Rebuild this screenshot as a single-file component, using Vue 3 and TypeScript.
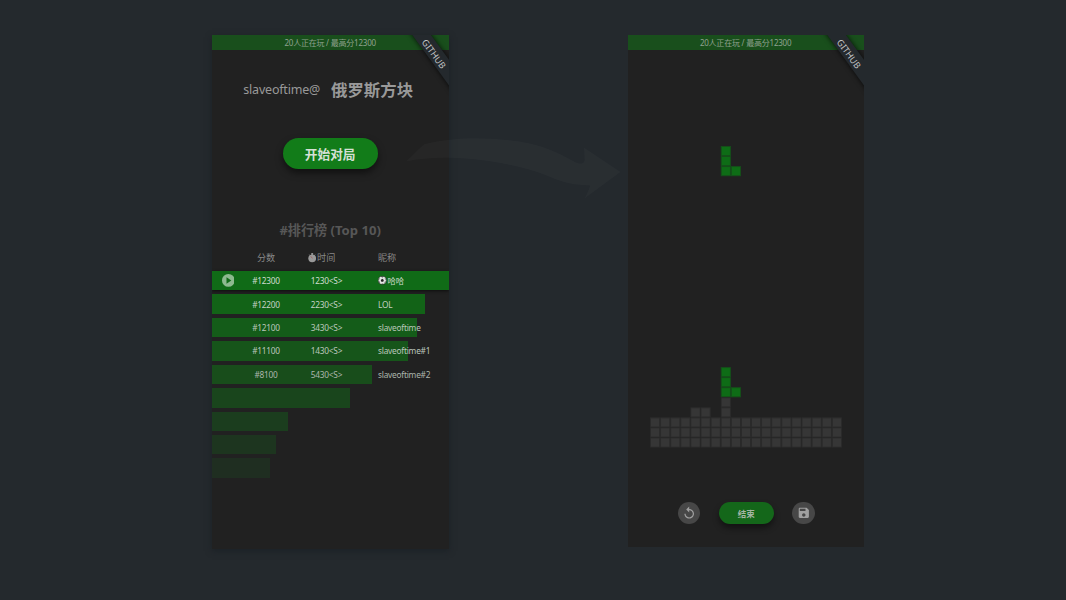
<script setup lang="ts">
interface Row {
  score: string
  time: string
  name: string
  width: number
  color: string
  ink: string
  ball?: boolean
  play?: boolean
}

const rows: Row[] = [
  { score: '#12300', time: '1230<S>', name: '哈哈', width: 237.3, color: '#106b17', ink: '#cfdccf', ball: true, play: true },
  { score: '#12200', time: '2230<S>', name: 'LOL', width: 213.4, color: '#126317', ink: '#c3d1c3' },
  { score: '#12100', time: '3430<S>', name: 'slaveoftime', width: 205.2, color: '#145c19', ink: '#bac7ba' },
  { score: '#11100', time: '1430<S>', name: 'slaveoftime#1', width: 196.4, color: '#16551a', ink: '#bcc6bc' },
  { score: '#8100', time: '5430<S>', name: 'slaveoftime#2', width: 160.3, color: '#184d1b', ink: '#acb5ac' },
  { score: '', time: '', name: '', width: 138.6, color: '#19451c', ink: '#999' },
  { score: '', time: '', name: '', width: 76.5, color: '#1b3d1e', ink: '#999' },
  { score: '', time: '', name: '', width: 64, color: '#1d351f', ink: '#999' },
  { score: '', time: '', name: '', width: 58.2, color: '#1f2e21', ink: '#999' },
]

interface Cell {
  col: number
  row: number
  live: boolean
}

const PITCH_X = 10.1
const PITCH_Y = 10.05

const cells: Cell[] = []
const piece = [[0, 0], [0, 1], [0, 2], [1, 2]]
for (const top of [0, 22]) {
  for (const [dx, dy] of piece) cells.push({ col: 7 + dx, row: top + dy, live: true })
}
for (const [col, row] of [[7, 25], [7, 26], [4, 26], [5, 26]]) cells.push({ col, row, live: false })
for (let row = 27; row < 30; row++) {
  for (let col = 0; col < 19; col++) cells.push({ col, row, live: false })
}
</script>

<template>
  <main class="stage">
    <section class="panel home">
      <div class="status">20人正在玩 / 最高分12300</div>
      <div class="ribbon"><span>GITHUB</span></div>
      <header class="title">
        <span class="author">slaveoftime@</span>
        <h1>俄罗斯方块</h1>
      </header>
      <button class="start">开始对局</button>
      <h2>#排行榜 (Top 10)</h2>
      <div class="line head">
        <span></span>
        <span class="center">分数</span>
        <span class="center clock">
          <svg viewBox="0 0 18 20" width="8.4" height="9.4">
            <rect x="7" y="0" width="4" height="4" fill="#999" />
            <circle cx="9" cy="11.3" r="8.3" fill="#999" />
            <path d="M6 7l3.5 4.5" stroke="#a44" stroke-width="1.3" />
            <path d="M3 3.5l2 2M15 3.5l-2 2" stroke="#999" stroke-width="2" />
          </svg>时间
        </span>
        <span>昵称</span>
      </div>
      <div class="board">
        <div v-for="(r, i) in rows" :key="i" class="row" :class="{ first: i === 0 }">
          <div class="bar" :style="{ width: r.width + 'px', background: r.color }"></div>
          <div class="line" :style="{ color: r.ink }">
            <span class="center">
              <svg v-if="r.play" class="play" viewBox="0 0 20 20" width="12.8" height="12.8">
                <circle cx="10" cy="10" r="10" fill="#8db98f" />
                <path d="M7 4.900v10.200l7.600-5.100z" fill="#106b17" />
              </svg>
            </span>
            <span class="center">{{ r.score }}</span>
            <span class="center">{{ r.time }}</span>
            <span class="name">
              <svg v-if="r.ball" viewBox="0 0 20 20" width="8.6" height="8.6">
                <circle cx="10" cy="10" r="9.4" fill="#e2e5e2" stroke="#222" stroke-width="1.2" />
                <path
                  d="M10 6.500l3.600 2.600-1.400 4.200H7.800L6.400 9.100zM6.500 1.400L10 3.200l3.500-1.800zM.8 8l2.600-.2 1-3.300zM19.200 8l-2.600-.2-1-3.300zM4 17l.6-3-2.600-1.600zM16 17l-.6-3 2.600-1.600zM8 19.300l2-1.800 2 1.800z"
                  fill="#222"
                />
              </svg>{{ r.name }}
            </span>
          </div>
        </div>
      </div>
    </section>

    <section class="panel game">
      <div class="status">20人正在玩 / 最高分12300</div>
      <div class="ribbon"><span>GITHUB</span></div>
      <svg class="well" viewBox="0 0 192 302" width="192" height="302">
        <rect
          v-for="(c, i) in cells"
          :key="i"
          :class="{ live: c.live }"
          :x="c.col * PITCH_X + 0.5"
          :y="c.row * PITCH_Y + 0.5"
          :width="PITCH_X - 0.9"
          :height="PITCH_Y - 0.9"
        />
      </svg>
      <footer class="controls">
        <button class="round">
          <svg viewBox="0 0 24 24" width="14.4" height="14.4">
            <path
              d="M12 5V1L7 6l5 5V7c3.310 0 6 2.690 6 6s-2.690 6-6 6-6-2.690-6-6H4c0 4.420 3.580 8 8 8s8-3.580 8-8-3.580-8-8-8z"
              fill="#a0a0a0"
            />
          </svg>
        </button>
        <button class="end">结束</button>
        <button class="round">
          <svg viewBox="0 0 24 24" width="13.6" height="13.6">
            <path
              d="M17 3H5c-1.110 0-2 .9-2 2v14c0 1.100.89 2 2 2h14c1.100 0 2-.9 2-2V7l-4-4zm-5 16c-1.660 0-3-1.340-3-3s1.340-3 3-3 3 1.340 3 3-1.340 3-3 3zm3-10H5V5h10v4z"
              fill="#a0a0a0"
            />
          </svg>
        </button>
      </footer>
    </section>

    <svg class="arrow" viewBox="0 0 216 62" width="216" height="62">
      <path
        d="M0 23.500 C6 18 11 12 18 6.200 C50 -2 90 -1 122 5 C145 10 158 18 170 24.500 C176 27 179 25 178.500 21 L178 9.500 L214.500 34 L178.500 60.500 Q183 52 184 47.500 C168 47 157 45 143 38.500 C120 29 90 23 58 20.500 C38 19 18 20 0 23.500Z"
        fill="#fff"
        fill-opacity="0.022"
      />
    </svg>
  </main>
</template>

<style>
body {
  margin: 0;
  background: #24292d;
}
</style>

<style scoped>
.stage {
  position: relative;
  box-sizing: border-box;
  width: 1066px;
  height: 600px;
  padding: 35px 202.500px 0 211.5px;
  display: flex;
  justify-content: space-between;
  align-items: flex-start;
  overflow: hidden;
  background: #24292d;
  font-family: 'Noto Sans', 'Open Sans', 'Noto Sans CJK SC', sans-serif;
}
.panel {
  position: relative;
  display: flex;
  flex-direction: column;
  align-items: center;
  overflow: hidden;
  background: #212121;
}
.home {
  width: 237.3px;
  height: 514px;
  box-shadow: 0 2px 6px rgba(20, 28, 33, 0.55);
}
.game {
  width: 235.8px;
  height: 511.7px;
}
.status {
  width: 100%;
  height: 15px;
  line-height: 16px;
  text-align: center;
  font-size: 8px;
  letter-spacing: -0.22px;
  color: #8fa18f;
  background: #194f1c;
}
.ribbon {
  position: absolute;
  left: 163.500px;
  top: 11.300px;
  width: 120px;
  height: 15.400px;
  transform: rotate(54deg);
  display: flex;
  align-items: center;
  justify-content: center;
  background: #24292d;
  box-shadow: 0 0 4px 1px rgba(0, 0, 0, 0.55);
  color: #c4c6c8;
  font-size: 9px;
  line-height: 15px;
}
.ribbon span {
  padding-top: 1.500px;
  padding-right: 1px;
}
.game .ribbon {
  left: 162px;
  top: 10.800px;
}
.title {
  height: 24px;
  margin-top: 28px;
  margin-right: 4px;
  display: flex;
  align-items: center;
  gap: 11px;
  color: #999;
}
.author {
  font-size: 12.500px;
  letter-spacing: -0.200px;
  line-height: 24px;
}
h1,
h2 {
  margin: 0;
  font-weight: 700;
}
h1 {
  font-size: 16.400px;
  line-height: 24px;
}
button {
  border: 0;
  padding: 0;
  font-family: inherit;
  font-weight: 700;
}
.start {
  width: 95px;
  height: 31.500px;
  margin-top: 35.700px;
  border-radius: 16px;
  background: #127c19;
  box-shadow: 0 4px 7px rgba(0, 0, 0, 0.5);
  color: #d5e0d5;
  font-size: 12.700px;
}
h2 {
  height: 20px;
  margin-top: 51px;
  line-height: 21.500px;
  font-size: 13.100px;
  color: #575757;
}
.line {
  display: grid;
  grid-template-columns: 33px 43px 79px 1fr;
  width: 100%;
  align-items: center;
  white-space: nowrap;
}
.center {
  text-align: center;
}
.head {
  height: 16px;
  margin-top: 10px;
  line-height: 16px;
  font-size: 9.100px;
  color: #888;
}
.head > span:last-child,
.name {
  padding-left: 11.500px;
}
.clock {
  display: flex;
  align-items: center;
  justify-content: center;
  gap: 1px;
  margin-left: -11px;
}
.board {
  width: 100%;
  margin-top: 4.700px;
  display: flex;
  flex-direction: column;
  gap: 3.900px;
}
.row {
  display: grid;
  height: 19.550px;
}
.row > * {
  grid-area: 1 / 1;
}
.row .line {
  font-size: 8.300px;
  letter-spacing: -0.230px;
  line-height: 19px;
}
.row.first .bar {
  box-shadow: 0 1px 3px rgba(0, 0, 0, 0.6);
}
.row .line .center:nth-child(3) {
  margin-left: -1px;
}
.play {
  display: block;
  margin: 0 auto;
}
.name {
  display: flex;
  align-items: center;
  gap: 1px;
}
.well {
  display: block;
  margin: 96.300px 0 0 1.500px;
}
.well rect {
  fill: #363636;
  stroke: #2b2b2b;
  stroke-width: 0.900px;
}
.well .live {
  fill: #0e6c16;
  stroke: #15501a;
}
.controls {
  display: flex;
  align-items: center;
  gap: 18.600px;
  margin: 53.600px 0 0 1.200px;
}
.round {
  width: 22.400px;
  height: 22.400px;
  border-radius: 50%;
  display: flex;
  align-items: center;
  justify-content: center;
  background: #474747;
}
.end {
  width: 55.400px;
  height: 22.400px;
  border-radius: 12px;
  background: #14671a;
  box-shadow: 0 4px 6px rgba(0, 0, 0, 0.45);
  color: #a5b5a5;
  font-size: 8.500px;
}
.arrow {
  position: absolute;
  left: 405.500px;
  top: 138px;
}
</style>
